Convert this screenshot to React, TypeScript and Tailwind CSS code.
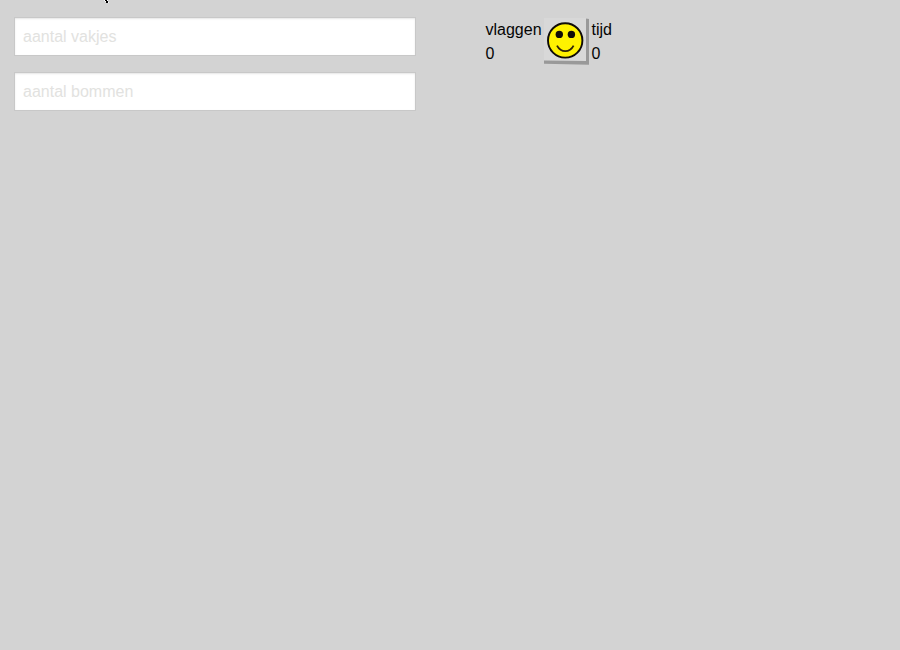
const inputClass =
  "block h-[39px] w-[402px] rounded-none border border-[#c8c8c8] bg-white px-2 text-[16px] text-black shadow-[inset_0_1px_2px_rgba(10,10,10,0.1)] outline-none placeholder:text-[#e2e2e0] placeholder:opacity-100";

function Smiley() {
  return (
    <svg className="block h-[48px] w-[46px]" viewBox="0 0 46 48" aria-label="smiley">
      <rect x="0" y="1" width="43" height="43" fill="#d8d8d8" />
      <path d="M42 1.5L45 2V47.8L0 46.8V43.5L42 44Z" fill="#999" />
      <circle cx="21.2" cy="23.4" r="17.2" fill="#fff200" stroke="#100c08" strokeWidth="1.9" />
      <circle cx="15.3" cy="17.4" r="3.7" fill="#100c08" />
      <circle cx="27.4" cy="17.4" r="3.7" fill="#100c08" />
      <path d="M13 28.6Q16 34.2 21.3 34.2Q26.6 34.2 29.6 28.6" fill="none" stroke="#302408" strokeWidth="1.8" />
    </svg>
  );
}

function Counter({ label, value }: { label: string; value: number }) {
  return (
    <div className="pt-[1px]">
      <div>{label}</div>
      <div>{value}</div>
    </div>
  );
}

export default function App() {
  return (
    <div className="relative flex h-[650px] w-[900px] items-start overflow-hidden bg-[#d3d3d3] pl-[14px] pt-[17px] font-['Liberation_Sans',Arial,sans-serif] text-[16px] leading-6 text-[#050505]">
      <svg className="absolute left-[104px] top-0 h-[4px] w-[5px]" viewBox="0 0 5 4" shapeRendering="crispEdges">
        <path d="M0 0H4V2H5V3H2V2H1V1H0Z" fill="#fff" />
        <path d="M1 0H3V1H4V3H2V1H1Z" fill="#000" />
      </svg>
      <form className="flex flex-col gap-4">
        <input className={inputClass} placeholder="aantal vakjes" />
        <input className={inputClass} placeholder="aantal bommen" />
      </form>
      <div className="ml-[69.5px] flex items-start">
        <div className="w-[58.5px]">
          <Counter label="vlaggen" value={0} />
        </div>
        <Smiley />
        <div className="ml-[1.5px]">
          <Counter label="tijd" value={0} />
        </div>
      </div>
    </div>
  );
}
